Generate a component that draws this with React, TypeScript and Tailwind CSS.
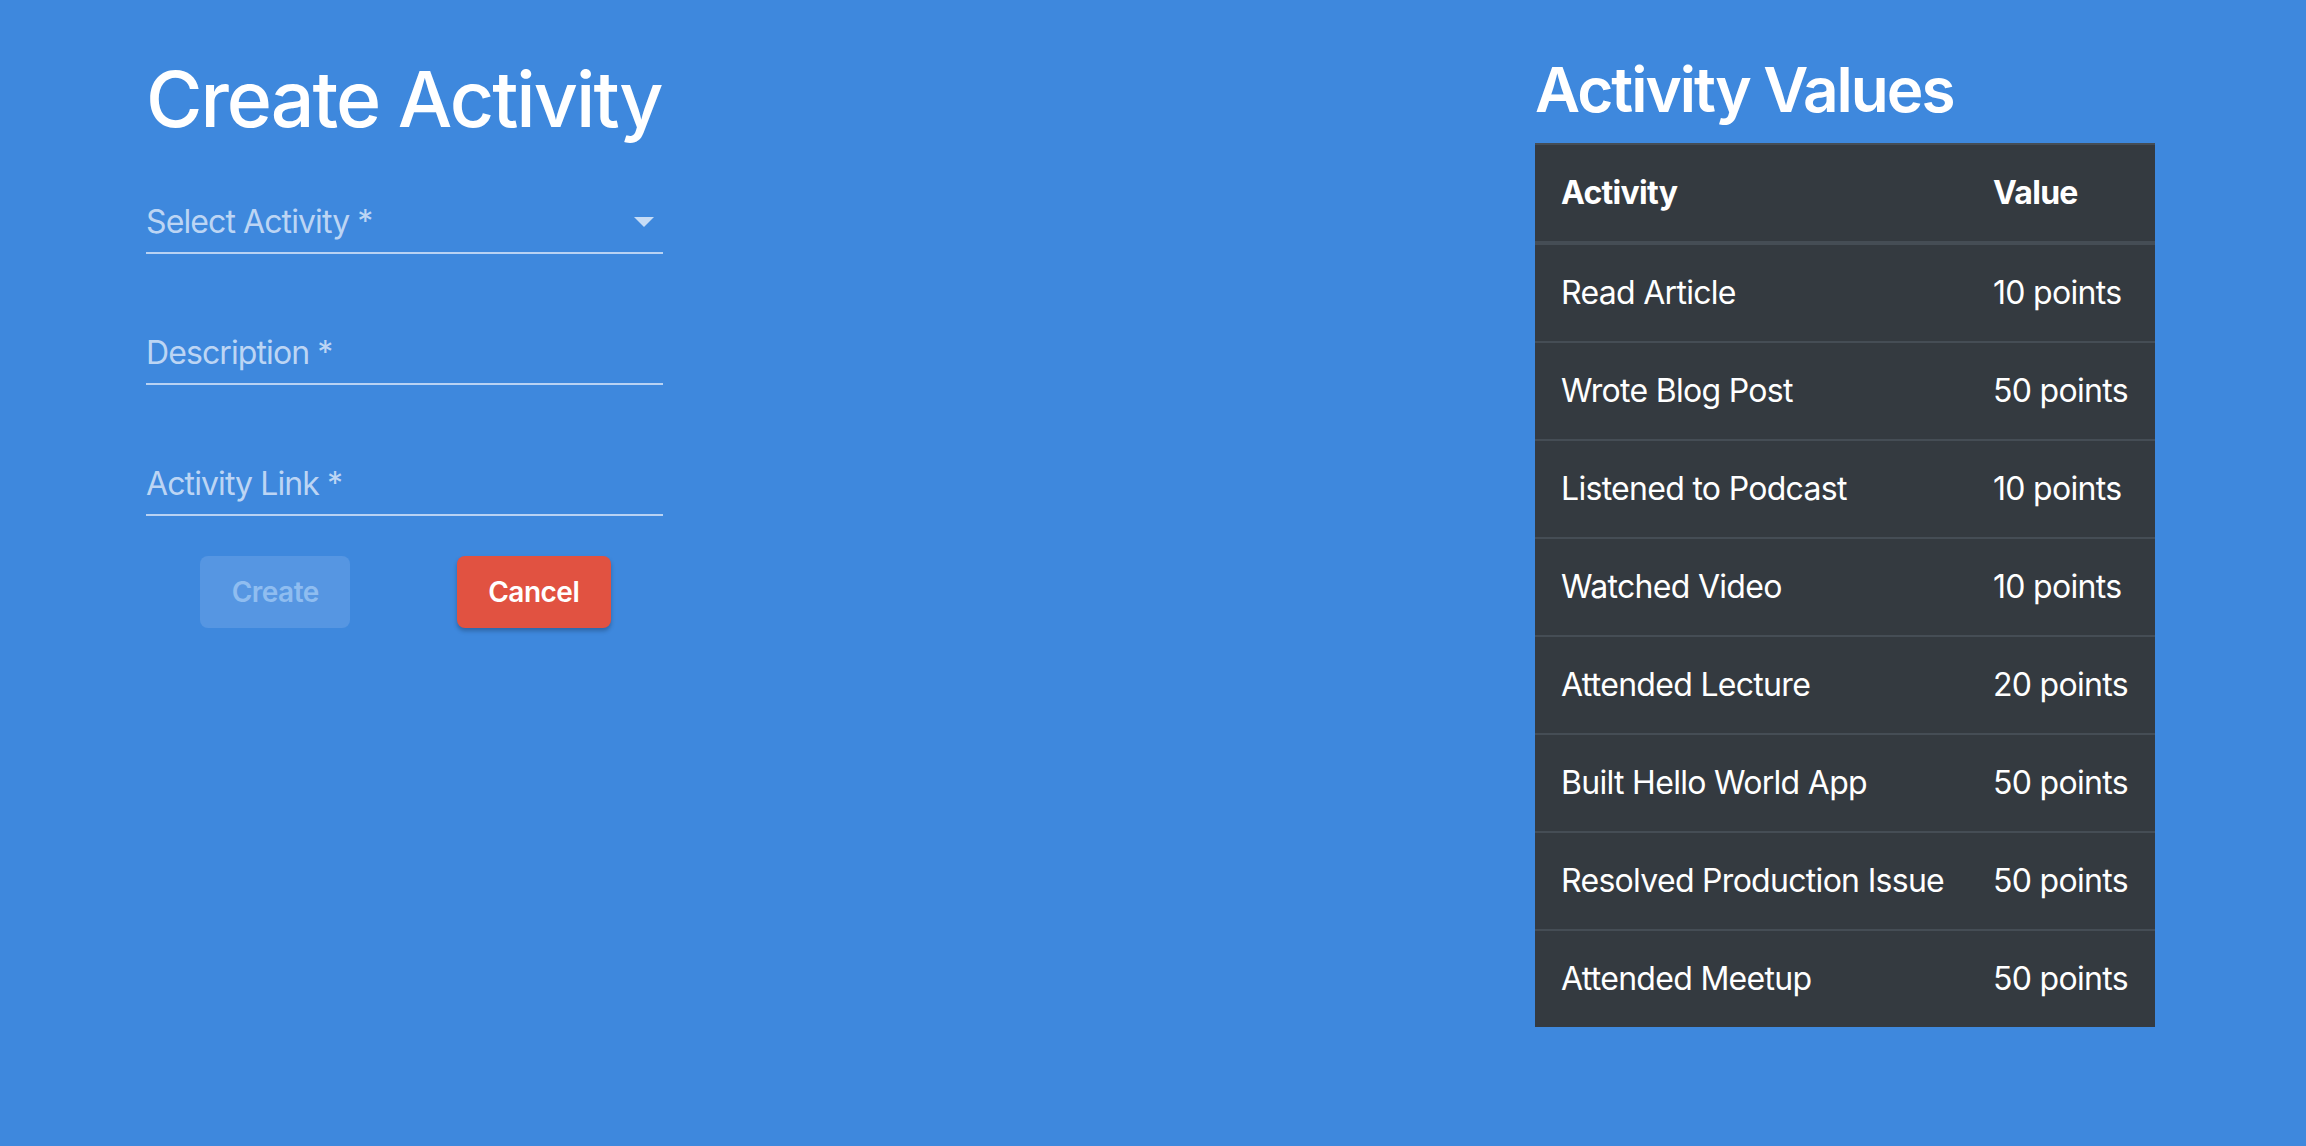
const activities = [
  { name: "Read Article", value: "10 points" },
  { name: "Wrote Blog Post", value: "50 points" },
  { name: "Listened to Podcast", value: "10 points" },
  { name: "Watched Video", value: "10 points" },
  { name: "Attended Lecture", value: "20 points" },
  { name: "Built Hello World App", value: "50 points" },
  { name: "Resolved Production Issue", value: "50 points" },
  { name: "Attended Meetup", value: "50 points" },
];

function Field({ label, select, first }: { label: string; select?: boolean; first?: boolean }) {
  return (
    <div
      className={`${first ? "mt-[57px]" : "mt-[80px]"} flex items-center justify-between border-b-2 border-[#b8d2f3] pb-[11px]`}
    >
      <span className="text-[32px] leading-[38px] tracking-[-0.9px] text-[#bcd5f4]">{label}</span>
      {select && (
        <svg width="20" height="10" viewBox="0 0 20 10" className="mr-[9px]">
          <path d="M0 0 L10 10 L20 0 Z" fill="#c6dcf6" />
        </svg>
      )}
    </div>
  );
}

export default function App() {
  return (
    <div
      className="min-h-screen bg-[#3e88dd] text-white flex justify-between pl-[146px] pr-[151px] pt-[52px]"
      style={{ fontFamily: "Inter, 'Noto Sans', sans-serif" }}
    >
      <div className="w-[517px] shrink-0">
        <h1 className="text-[77px] leading-[94px] font-medium tracking-[-2px] whitespace-nowrap">Create Activity</h1>
        <Field label="Select Activity *" select first />
        <Field label="Description *" />
        <Field label="Activity Link *" />
        <div className="flex mt-[40px]">
          <div className="flex-1 flex justify-center">
            <button
              disabled
              className="h-[72px] w-[150px] rounded-[8px] bg-[#5696e2] text-[28px] font-semibold tracking-[-0.5px] text-[#8fbdf0]"
            >
              Create
            </button>
          </div>
          <div className="flex-1 flex justify-center">
            <button className="h-[72px] w-[154px] rounded-[8px] bg-[#e15241] text-[28px] font-semibold tracking-[-0.5px] text-white shadow-[0_3px_4px_rgba(0,0,0,0.25)]">
              Cancel
            </button>
          </div>
        </div>
      </div>

      <div className="w-[620px] shrink-0">
        <h2 className="text-[62px] leading-[76px] font-semibold tracking-[-2px] mb-[15px] whitespace-nowrap">
          Activity Values
        </h2>
        <table className="w-[620px] table-fixed bg-[#343a40] text-[32px] leading-[48px] tracking-[-0.7px]">
          <thead>
            <tr>
              <th className="w-[433px] text-left font-bold px-[26px] py-[24px] border-t-2 border-b-4 border-[#454d55]">
                Activity
              </th>
              <th className="text-left font-bold px-[25px] py-[24px] border-t-2 border-b-4 border-[#454d55]">Value</th>
            </tr>
          </thead>
          <tbody>
            {activities.map((a) => (
              <tr key={a.name}>
                <td className="px-[26px] py-[24px] border-t-2 border-[#454d55] whitespace-nowrap">{a.name}</td>
                <td className="px-[25px] py-[24px] border-t-2 border-[#454d55] whitespace-nowrap">{a.value}</td>
              </tr>
            ))}
          </tbody>
        </table>
      </div>
    </div>
  );
}
